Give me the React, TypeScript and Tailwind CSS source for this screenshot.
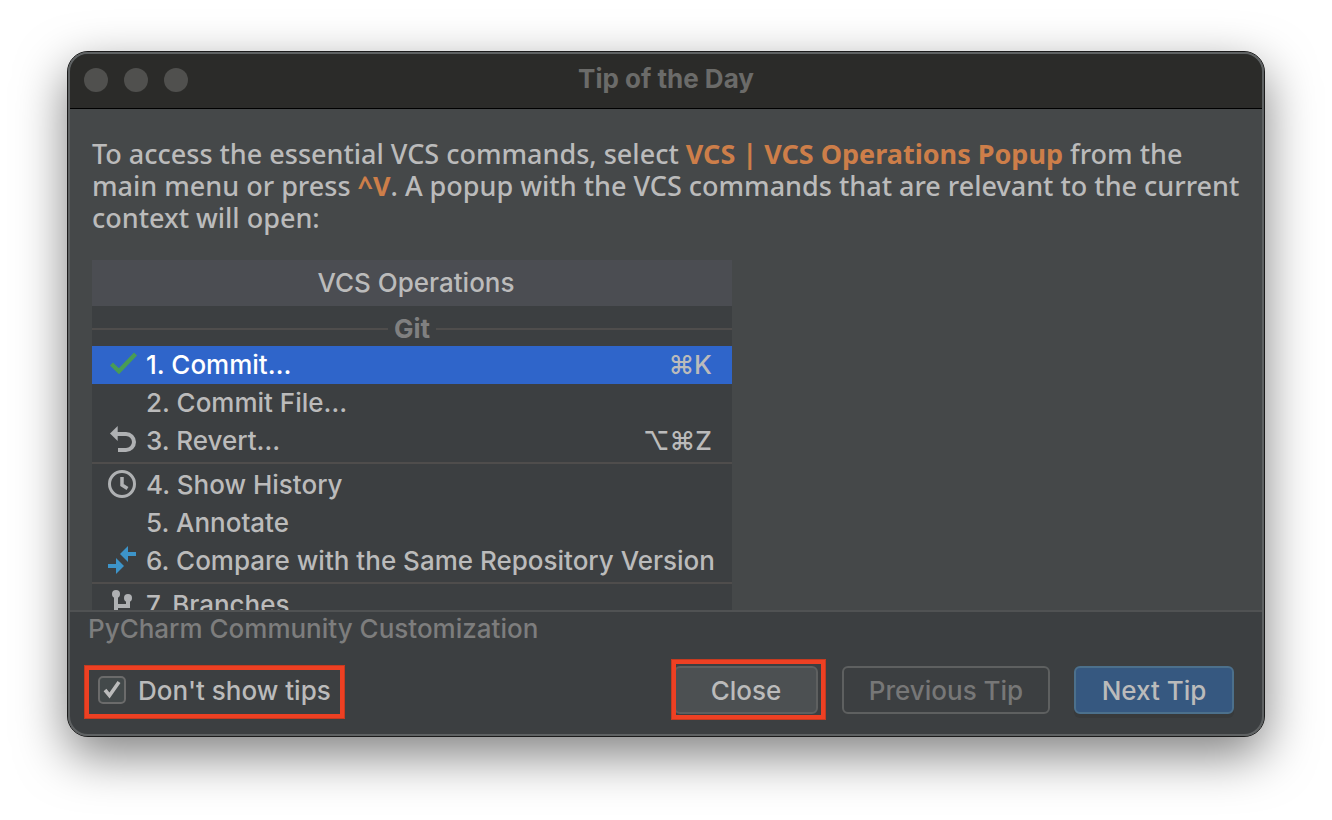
import { useState, type ReactNode } from 'react';

type MenuEntry = {
  label: string;
  icon?: ReactNode;
  shortcut?: string;
  selected?: boolean;
};

const CommitIcon = () => (
  <svg viewBox="0 0 28 28" className="size-7 overflow-visible" aria-hidden="true">
    <path d="M3.500 13 10.900 20.200 27.500 3" fill="none" stroke="#499c54" strokeWidth="4.200" />
  </svg>
);

const RevertIcon = () => (
  <svg viewBox="0 0 28 28" className="size-7 overflow-visible" aria-hidden="true">
    <path d="M2 6.500 9.700 -1V14Z" fill="#afb1b3" />
    <path d="M9 7H18A8 8 0 0 1 18 23H10" fill="none" stroke="#afb1b3" strokeWidth="4" />
  </svg>
);

const HistoryIcon = () => (
  <svg viewBox="0 0 28 28" className="size-7 overflow-visible" aria-hidden="true">
    <circle cx="14" cy="13" r="12.500" fill="none" stroke="#afb1b3" strokeWidth="3" />
    <path d="M14 6V14L19.500 17.500" fill="none" stroke="#afb1b3" strokeWidth="3.500" />
  </svg>
);

const CompareIcon = () => (
  <svg viewBox="0 0 28 28" className="size-7 overflow-visible" aria-hidden="true">
    <path d="M12 7 20 -1V5H28V9H20V15Z" fill="#3d94c9" />
    <path d="M0 17H8V11L16 19 8 27V21H0Z" fill="#3d94c9" />
  </svg>
);

const BranchIcon = () => (
  <svg viewBox="0 0 28 28" className="size-7 overflow-visible" aria-hidden="true">
    <circle cx="8" cy="3" r="4" fill="#afb1b3" />
    <circle cx="20" cy="7" r="4" fill="#afb1b3" />
    <path d="M8 3V28M20 7V15H8" fill="none" stroke="#afb1b3" strokeWidth="4" />
  </svg>
);

const groups: MenuEntry[][] = [
  [
    { label: '1. Commit…', icon: <CommitIcon />, shortcut: '⌘K', selected: true },
    { label: '2. Commit File…' },
    { label: '3. Revert…', icon: <RevertIcon />, shortcut: '⌥⌘Z' },
  ],
  [
    { label: '4. Show History', icon: <HistoryIcon /> },
    { label: '5. Annotate' },
    { label: '6. Compare with the Same Repository Version', icon: <CompareIcon /> },
  ],
  [{ label: '7. Branches', icon: <BranchIcon /> }],
];

function MenuRow({ label, icon, shortcut, selected }: MenuEntry) {
  return (
    <li>
      <button
        type="button"
        className={`flex h-[38px] w-full items-center gap-[10px] pr-5 pl-4 text-left whitespace-nowrap ${
          selected ? 'bg-[#2f65ca]' : ''
        }`}
      >
        <span className="size-7 shrink-0">{icon}</span>
        <span className={`flex-1 ${selected ? 'text-white' : ''}`}>{label}</span>
        {shortcut && <span>{shortcut}</span>}
      </button>
    </li>
  );
}

function VcsPopup() {
  return (
    <div className="w-full max-w-[640px] bg-[#3c3f41]">
      <h2 className="flex h-[46px] items-center justify-center bg-[#4b4d52] pl-2">VCS Operations</h2>
      <div className="flex h-10 items-center gap-[6px] pt-[6px] font-bold text-[#808080]">
        <span className="h-[2px] flex-1 bg-[#4f4d4c]" />
        Git
        <span className="h-[2px] flex-1 bg-[#4f4d4c]" />
      </div>
      {groups.map((group, i) => (
        <div key={group[0].label}>
          {i > 0 && <hr className="my-[2px] border-t-2 border-[#4f4d4c]" />}
          <ul>
            {group.map((entry) => (
              <MenuRow key={entry.label} {...entry} />
            ))}
          </ul>
        </div>
      ))}
    </div>
  );
}

function Highlight({ className }: { className: string }) {
  return (
    <span
      className={`pointer-events-none absolute border-[5px] border-[#ee4023] outline-1 -outline-offset-1 outline-[#c53a20] ${className}`}
    />
  );
}

function App() {
  const [hideTips, setHideTips] = useState(true);

  return (
    <div className="flex h-screen flex-col bg-white px-[67px] pt-[51px] pb-[83px] font-[Inter,sans-serif] text-[26px] leading-8 font-medium text-[#bbbbbb]">
      <div className="flex min-h-0 flex-1 flex-col rounded-[21px] border border-[#1b1b1b] bg-[#5f6263] shadow-[0_18px_50px_rgba(0,0,0,0.5)]">
        <div className="flex min-h-0 flex-1 flex-col overflow-hidden rounded-[20px] border-2 border-[#5f6263] bg-[#3c3f41]">
          <header className="grid h-[55px] shrink-0 grid-cols-[1fr_auto_1fr] items-center border-b border-black bg-[#2b2b29] px-[14px] pb-[2px]">
            <div className="flex gap-4">
              <button type="button" aria-label="Close window" className="size-6 rounded-full bg-[#50504e]" />
              <button type="button" aria-label="Minimize window" className="size-6 rounded-full bg-[#50504e]" />
              <button type="button" aria-label="Zoom window" className="size-6 rounded-full bg-[#50504e]" />
            </div>
            <h1 className="pb-[2px] font-bold text-[#6b6b69]">Tip of the Day</h1>
          </header>

          <main className="min-h-0 flex-1 overflow-hidden bg-[#454849] px-[22px] pt-[29px]">
            <p className="mb-[26px] font-['Noto_Sans',sans-serif] text-[27px]">
              To access the essential VCS commands, select{' '}
              <b className="text-[#cd7e49]">VCS | VCS Operations Popup</b> from the main menu or press{' '}
              <b className="text-[#cd7e49]">^V</b>. A popup with the VCS commands that are relevant to the
              current context will open:
            </p>
            <VcsPopup />
          </main>

          <footer className="shrink-0 border-t-2 border-[#505253] pr-7 pb-5 pl-[18px]">
            <p className="mb-[21px] pt-px text-[#7d7d7d]">PyCharm Community Customization</p>
            <div className="flex items-center justify-between">
              <label className="relative ml-[10px] flex h-12 items-center gap-3">
                <span className="relative size-7">
                  <input
                    type="checkbox"
                    checked={hideTips}
                    onChange={(e) => setHideTips(e.target.checked)}
                    className="block size-7 appearance-none rounded-[5px] border-2 border-[#6b6b6b] bg-[#43494a]"
                  />
                  {hideTips && (
                    <svg viewBox="0 0 28 28" className="pointer-events-none absolute inset-0" aria-hidden="true">
                      <path d="M7 14 11.500 19.500 21 6" fill="none" stroke="#bbbbbb" strokeWidth="3.600" />
                    </svg>
                  )}
                </span>
                <span className="pt-[2px]">Don't show tips</span>
                <Highlight className="-top-px -right-[14px] -bottom-[5px] -left-[14px]" />
              </label>
              <div className="flex gap-6">
                <div className="relative">
                  <button
                    type="button"
                    className="h-12 w-36 rounded-[6px] border-2 border-[#5e6060] bg-[#4c5052] pt-[2px]"
                  >
                    Close
                  </button>
                  <Highlight className="-top-[7px] -right-[8px] -bottom-[6px] -left-[3px]" />
                </div>
                <button
                  type="button"
                  disabled
                  className="h-12 w-52 rounded-[6px] border-2 border-[#5e6060] pt-[2px] text-[#777777]"
                >
                  Previous Tip
                </button>
                <button
                  type="button"
                  className="h-12 w-40 rounded-[6px] border-2 border-[#4c708c] bg-[#365880] pt-[2px] shadow-[0_4px_0_#383a3b]"
                >
                  Next Tip
                </button>
              </div>
            </div>
          </footer>
        </div>
      </div>
    </div>
  );
}

export default App;
